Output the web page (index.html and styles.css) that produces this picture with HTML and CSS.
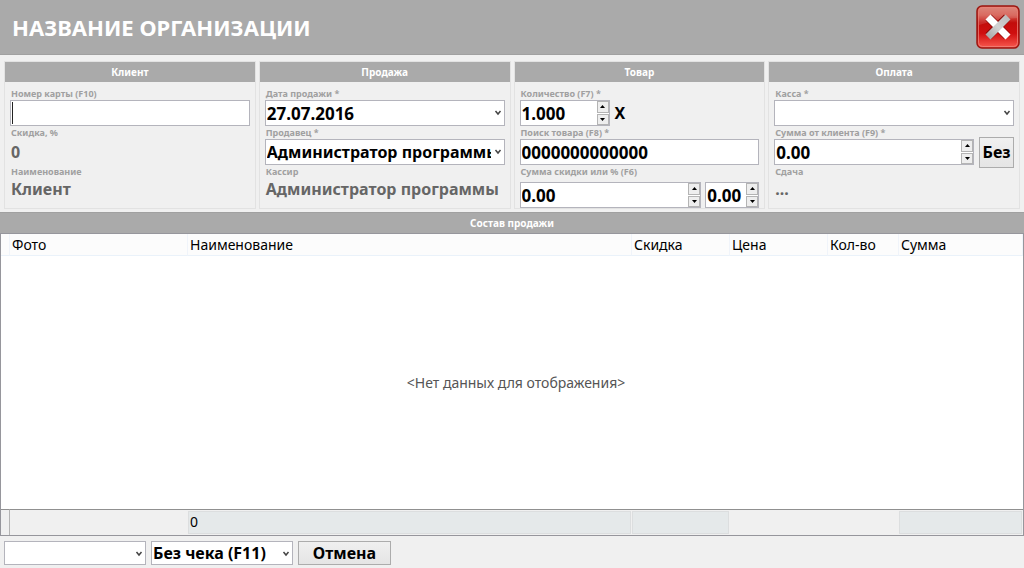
FILE: index.html
```
<!DOCTYPE html>
<html lang="ru">
<head>
<meta charset="utf-8">
<meta name="viewport" content="width=device-width, initial-scale=1">
<title>Продажа</title>
<link rel="stylesheet" href="styles.css">
</head>
<body>
<svg class="defs" aria-hidden="true">
  <symbol id="chevron" viewBox="0 0 8 6"><path d="M1.5 1 4 4 6.500 1" fill="none" stroke="#444" stroke-width="1.500"/></symbol>
  <symbol id="up" viewBox="0 0 5 3"><path d="M0 3 2.500 0 5 3z"/></symbol>
  <symbol id="down" viewBox="0 0 5 3"><path d="M0 0 2.500 3 5 0z"/></symbol>
</svg>

<header class="titlebar">
  <h1 class="title">НАЗВАНИЕ ОРГАНИЗАЦИИ</h1>
  <button class="close" type="button" aria-label="Закрыть">
    <svg class="close-icon" viewBox="0 0 44 44">
      <defs>
        <linearGradient id="red" x1="0" y1="0" x2="0" y2="1">
          <stop offset="0" stop-color="#d8786c"/><stop offset=".22" stop-color="#d4574b"/><stop offset=".4" stop-color="#c20d0b"/><stop offset=".65" stop-color="#cf0f0f"/><stop offset="1" stop-color="#fa5a50"/>
        </linearGradient>
        <linearGradient id="steel" x1="0" y1="1" x2="1" y2="0">
          <stop offset="0" stop-color="#a8a8a8"/><stop offset=".5" stop-color="#d2d2d2"/><stop offset="1" stop-color="#bcbcbc"/>
        </linearGradient>
      </defs>
      <rect x="1" y="1" width="42" height="42" rx="5" fill="url(#red)" stroke="#9c1610" stroke-width="1.500"/>
      <rect x="2.500" y="2.500" width="39" height="39" rx="4" fill="none" stroke="#f08a80" stroke-opacity=".7"/>
      <path d="M3 7q0-4 4-4h30q4 0 4 4v6Q22 14 3 20z" fill="#fff" fill-opacity=".12"/>
      <path d="M12.500 12.500 31 31" stroke="#8a0806" stroke-width="8.500"/>
      <path d="M31 12.500 12.500 31" stroke="#8a0806" stroke-width="8.500"/>
      <path d="M12 12 32 32" stroke="#fff" stroke-width="7"/>
      <path d="M32 12 12 32" stroke="url(#steel)" stroke-width="7"/>
    </svg>
  </button>
</header>

<main class="main">
<form class="panels">
  <section class="panel">
    <h2 class="panel-head">Клиент</h2>
    <div class="panel-body">
      <label class="label" for="card">Номер карты (F10)</label>
      <div class="row"><div class="field"><span class="caret"></span><input class="input" id="card" type="text"></div></div>
      <label class="label" for="disc">Скидка, %</label>
      <output class="value" id="disc">0</output>
      <label class="label" for="client">Наименование</label>
      <output class="value value-last" id="client">Клиент</output>
    </div>
  </section>

  <section class="panel">
    <h2 class="panel-head">Продажа</h2>
    <div class="panel-body">
      <label class="label" for="date">Дата продажи *</label>
      <div class="row"><div class="field"><select class="input select number" id="date"><option>27.07.2016</option></select><svg class="chevron"><use href="#chevron"/></svg></div></div>
      <label class="label" for="seller">Продавец *</label>
      <div class="row"><div class="field"><select class="input select" id="seller"><option>Администратор программы</option></select><svg class="chevron"><use href="#chevron"/></svg></div></div>
      <label class="label" for="cashier">Кассир</label>
      <output class="value value-last" id="cashier">Администратор программы</output>
    </div>
  </section>

  <section class="panel">
    <h2 class="panel-head">Товар</h2>
    <div class="panel-body">
      <label class="label" for="qty">Количество (F7) *</label>
      <div class="row">
        <div class="field qty"><input class="input number" id="qty" type="text" value="1.000"><span class="spin"><button class="step" type="button" aria-label="Больше"><svg class="arrow"><use href="#up"/></svg></button><button class="step" type="button" aria-label="Меньше"><svg class="arrow"><use href="#down"/></svg></button></span></div>
        <span class="times">X</span>
      </div>
      <label class="label" for="search">Поиск товара (F8) *</label>
      <div class="row"><div class="field"><input class="input number" id="search" type="text" value="0000000000000"></div></div>
      <label class="label" for="sum">Сумма скидки или % (F6)</label>
      <div class="row row-last">
        <div class="field"><input class="input number" id="sum" type="text" value="0.00"><span class="spin"><button class="step" type="button" aria-label="Больше"><svg class="arrow"><use href="#up"/></svg></button><button class="step" type="button" aria-label="Меньше"><svg class="arrow"><use href="#down"/></svg></button></span></div>
        <div class="field percent"><input class="input number" aria-label="Скидка в процентах" type="text" value="0.00"><span class="spin"><button class="step" type="button" aria-label="Больше"><svg class="arrow"><use href="#up"/></svg></button><button class="step" type="button" aria-label="Меньше"><svg class="arrow"><use href="#down"/></svg></button></span></div>
      </div>
    </div>
  </section>

  <section class="panel">
    <h2 class="panel-head">Оплата</h2>
    <div class="panel-body">
      <label class="label" for="till">Касса *</label>
      <div class="row"><div class="field"><select class="input select" id="till"><option></option></select><svg class="chevron"><use href="#chevron"/></svg></div></div>
      <label class="label" for="paid">Сумма от клиента (F9) *</label>
      <div class="row">
        <div class="field"><input class="input number" id="paid" type="text" value="0.00"><span class="spin"><button class="step" type="button" aria-label="Больше"><svg class="arrow"><use href="#up"/></svg></button><button class="step" type="button" aria-label="Меньше"><svg class="arrow"><use href="#down"/></svg></button></span></div>
        <button class="button exact" type="button">Без</button>
      </div>
      <label class="label" for="change">Сдача</label>
      <output class="value value-last" id="change">...</output>
    </div>
  </section>
</form>

<h2 class="section-head">Состав продажи</h2>
<table class="goods">
  <colgroup><col class="c-mark"><col class="c-photo"><col><col class="c-num"><col class="c-num"><col class="c-qty"><col class="c-sum"></colgroup>
  <thead><tr><td></td><th>Фото</th><th>Наименование</th><th>Скидка</th><th>Цена</th><th>Кол-во</th><th>Сумма</th></tr></thead>
  <tbody><tr><td class="empty" colspan="7">&lt;Нет данных для отображения&gt;</td></tr></tbody>
  <tfoot><tr><td class="mark"></td><td></td><td><div class="total">0</div></td><td><div class="total"></div></td><td></td><td></td><td><div class="total"></div></td></tr></tfoot>
</table>
</main>

<footer class="actions">
  <div class="field action-select"><select class="input select" aria-label="Режим"><option></option></select><svg class="chevron"><use href="#chevron"/></svg></div>
  <div class="field action-select"><select class="input select" aria-label="Печать чека"><option>Без чека (F11)</option></select><svg class="chevron"><use href="#chevron"/></svg></div>
  <button class="button cancel" type="button">Отмена</button>
</footer>
</body>
</html>
```

FILE: styles.css
```
* { box-sizing: border-box; }
body {
  margin: 0;
  min-height: 100vh;
  display: flex;
  flex-direction: column;
  background: #f0f0f0;
  color: #000;
  font-family: "Noto Sans", "Open Sans", sans-serif;
}
h1, h2 { margin: 0; }
button, input, select { font: inherit; color: inherit; margin: 0; }
.defs { display: none; }

.titlebar {
  display: flex;
  align-items: center;
  justify-content: space-between;
  height: 55px;
  padding: 0 4px 0 12px;
  background: #aaa;
  border-bottom: 1px solid #a0a0a0;
}
.title { color: #fff; font-size: 22px; line-height: 30px; }
.close { width: 44px; height: 44px; padding: 0; border: 0; background: none; }
.close-icon { display: block; width: 44px; height: 44px; }

.main { flex: 1; display: flex; flex-direction: column; }
.panels {
  display: grid;
  grid-template-columns: repeat(4, minmax(0, 1fr));
  gap: 3px;
  padding: 6px 4px 3px;
}
.panel { border: 1px solid #e2e2e2; }
.panel-head, .section-head {
  background: #aaa;
  color: #fff;
  font-size: 10px;
  line-height: 20px;
  text-align: center;
}
.panel-body { padding: 5px 5px 0; }
.label {
  display: block;
  padding-left: 1px;
  color: #a0a0a0;
  font-size: 9px;
  font-weight: bold;
  line-height: 13px;
}
.row { display: flex; align-items: center; gap: 5px; height: 26px; }
.row-last { height: 30px; gap: 4px; align-items: flex-end; }
.field {
  position: relative;
  flex: 1;
  min-width: 0;
  display: flex;
  height: 26px;
  background: #fff;
  border: 1px solid #b4b4bc;
}
.input {
  flex: 1;
  width: 0;
  min-width: 0;
  padding: 0 1px;
  border: 0;
  outline: 0;
  border-radius: 0;
  background: none;
  font-size: 16px;
  font-weight: bold;
}
.number { font-size: 17px; }
.select { appearance: none; padding-right: 13px; }
.chevron { position: absolute; right: 2px; top: 9px; width: 8px; height: 6px; pointer-events: none; }
.caret { width: 1px; margin: 1px; background: #222; }
.value {
  display: block;
  height: 26px;
  padding-left: 1px;
  color: #666;
  font-size: 16px;
  font-weight: bold;
  line-height: 26px;
  white-space: nowrap;
}
.value-last { height: 30px; line-height: 22px; }
.spin { display: flex; flex-direction: column; gap: 1px; width: 12px; }
.step {
  flex: 1;
  display: flex;
  align-items: center;
  justify-content: center;
  padding: 0;
  border: 1px solid #b4b4b4;
  background: #eee;
}
.arrow { width: 5px; height: 3px; }
.qty { flex: 0 0 90px; }
.percent { flex: 0 0 54px; }
.times { font-size: 16px; font-weight: bold; }
.button {
  padding: 0;
  border: 1px solid #acacac;
  background: linear-gradient(#f0f0f0, #e5e5e5);
  font-size: 16px;
  font-weight: bold;
}
.exact { width: 35px; height: 31px; }

.section-head { border-top: 1px solid #a0a0a0; }
.goods {
  flex: 1;
  width: 100%;
  table-layout: fixed;
  border-collapse: separate;
  border-spacing: 0;
  border: 1px solid #96969c;
  background: #fff;
  font-size: 14px;
  line-height: 20px;
}
.goods th, .goods td { padding: 0; }
.goods th, .goods thead td {
  height: 22px;
  border-right: 1px solid #f0f4fa;
  border-bottom: 1px solid #eaf2fa;
  background: #fcfcfc;
  font-weight: normal;
  text-align: left;
}
.goods th { padding-left: 2px; }
.c-mark { width: 9px; }
.c-photo { width: 178px; }
.c-num { width: 98px; }
.c-qty { width: 71px; }
.c-sum { width: 124px; }
.goods .empty { color: #555; text-align: center; padding-left: 8px; }
.goods tfoot td { height: 26px; background: #f0f0f0; border-top: 1px solid #909090; }
.goods .mark { border-right: 1px solid #b4b4b4; }
.total {
  height: 23px;
  margin: 1px 1px 1px 0;
  padding-left: 1px;
  border: 1px solid #dcdedf;
  background: #e5e9ea;
}

.actions { display: flex; gap: 5px; padding: 5px 4px 3px; }
.action-select { flex: 0 0 142px; height: 24px; }
.cancel { width: 93px; height: 24px; line-height: 22px; }
```
